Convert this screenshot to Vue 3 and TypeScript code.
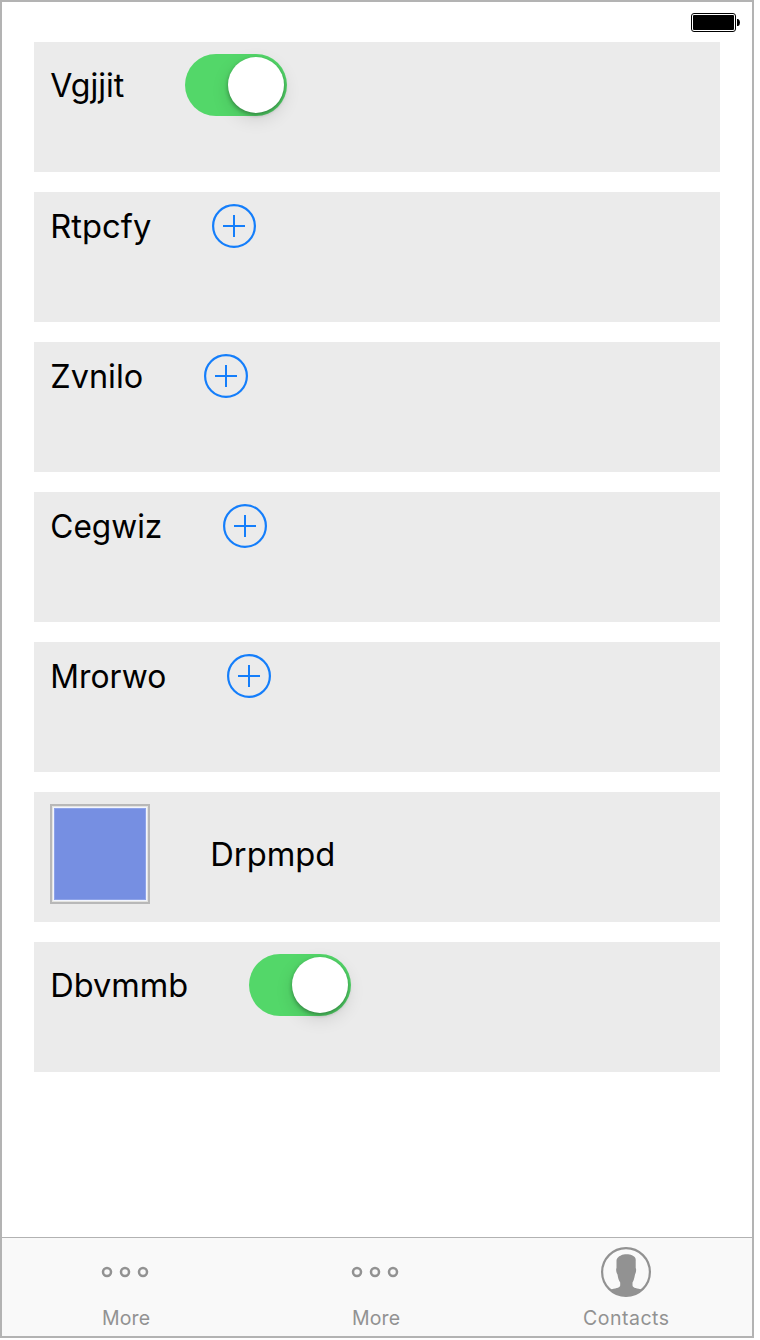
<script setup lang="ts">
type Kind = 'switch' | 'add' | 'image'

interface Row {
  label: string
  width: number
  kind: Kind
}

interface Tab {
  label: string
  width: number
  icon: 'more' | 'contacts'
}

const rows: Row[] = [
  { label: 'Vgjjit', width: 75, kind: 'switch' },
  { label: 'Rtpcfy', width: 102, kind: 'add' },
  { label: 'Zvnilo', width: 94, kind: 'add' },
  { label: 'Cegwiz', width: 113, kind: 'add' },
  { label: 'Mrorwo', width: 117, kind: 'add' },
  { label: 'Drpmpd', width: 126, kind: 'image' },
  { label: 'Dbvmmb', width: 139, kind: 'switch' },
]

const tabs: Tab[] = [
  { label: 'More', width: 48, icon: 'more' },
  { label: 'More', width: 48, icon: 'more' },
  { label: 'Contacts', width: 86, icon: 'contacts' },
]
</script>

<template>
  <div class="screen">
    <header class="status">
      <svg class="battery" width="50" height="20" viewBox="0 0 50 20">
        <rect x="0.5" y="0.5" width="44" height="18" rx="2.5" fill="#fff" stroke="#000" />
        <rect x="2" y="2" width="41" height="15" rx="1" fill="#000" />
        <path d="M46 6h1.2Q49 7 49 9.5T47.2 13H46z" fill="#000" />
      </svg>
    </header>

    <main class="rows">
      <section v-for="row in rows" :key="row.label" class="row">
        <div v-if="row.kind === 'image'" class="swatch"></div>
        <svg class="label" :width="row.width" height="40">
          <text x="0.3" y="32" :textLength="row.width - 1" lengthAdjust="spacingAndGlyphs">{{ row.label }}</text>
        </svg>
        <div v-if="row.kind === 'switch'" class="switch"><div class="knob"></div></div>
        <svg v-if="row.kind === 'add'" width="44" height="44" viewBox="0 0 44 44" fill="none" stroke="#147efb" stroke-width="2">
          <circle cx="22" cy="22" r="20.9" stroke-width="2.2" />
          <path d="M11 22H33M22 11V33" />
        </svg>
      </section>
    </main>

    <nav class="tabs">
      <div v-for="(tab, i) in tabs" :key="i" class="tab">
        <svg v-if="tab.icon === 'more'" class="icon" width="50" height="50" viewBox="0 0 50 50" fill="none" stroke="#929292" stroke-width="2.5">
          <circle cx="6" cy="25" r="4" />
          <circle cx="24" cy="25" r="4" />
          <circle cx="42" cy="25" r="4" />
        </svg>
        <svg v-else class="icon" width="50" height="50" viewBox="0 0 50 50">
          <circle cx="25" cy="25" r="23.9" fill="none" stroke="#929292" stroke-width="2.2" />
          <path
            d="M15.5 21V14.500C15.200 10.500 18.500 9.300 20.200 8.200C23 6.800 28 6.800 31 8.200C34 9.500 35 11 34.700 14V21C35.600 22 35 25.800 34 27.500C33.500 30.500 32.700 33.800 31.500 35.500V38.500C32 41.200 36 41.300 41.500 42.800C32 51.500 18 51.500 9 42.800C14 41.300 18.700 41.200 19.200 38.500V35.500C17.700 33.500 17 30.500 16.500 27.500C15.300 25.800 14.700 22 15.500 21Z"
            fill="#929292"
          />
        </svg>
        <svg class="caption" :width="tab.width" height="26">
          <text x="0" y="20" :textLength="tab.width" lengthAdjust="spacing">{{ tab.label }}</text>
        </svg>
      </div>
    </nav>
  </div>
</template>

<style>
body {
  background: #fff;
}
</style>

<style scoped>
.screen {
  box-sizing: border-box;
  width: 754px;
  height: 1338px;
  border: 2px solid #b3b3b3;
  display: flex;
  flex-direction: column;
  background: #fff;
  font-family: Inter, "Liberation Sans", sans-serif;
}
.status {
  height: 40px;
  box-sizing: border-box;
  padding: 11px 11px 0 0;
  display: flex;
  justify-content: flex-end;
}
.battery {
  display: block;
}
.rows {
  flex: 1;
  padding: 0 32px;
  display: flex;
  flex-direction: column;
  gap: 20px;
}
.row {
  box-sizing: border-box;
  height: 130px;
  padding: 12px 16px;
  background: #ebebeb;
  display: flex;
  align-items: center;
  align-content: flex-start;
  flex-wrap: wrap;
  gap: 60px;
}
.label,
.caption {
  display: block;
  overflow: visible;
}
.label text {
  font-size: 33px;
  fill: #000;
}
.switch {
  box-sizing: border-box;
  width: 102px;
  height: 62px;
  padding: 3px;
  border-radius: 31px;
  background: #53d769;
  display: flex;
  justify-content: flex-end;
}
.knob {
  width: 56px;
  height: 56px;
  border-radius: 50%;
  background: #fff;
  box-shadow: 0 6px 18px rgba(0, 0, 0, 0.12), 0 2px 4px rgba(0, 0, 0, 0.33);
}
.swatch {
  box-sizing: border-box;
  width: 100px;
  height: 100px;
  border: 2px solid #b8b8b8;
  padding: 2px;
  background: #768fe2 content-box;
  box-shadow: inset 0 0 0 1px #e4e4e0, inset 0 0 0 2px #f2f5ff, inset 0 0 0 3px #8ea3e8;
}
.tabs {
  box-sizing: border-box;
  height: 99px;
  border-top: 1px solid #b2b2b2;
  background: #f9f9f9;
  display: flex;
}
.tab {
  box-sizing: border-box;
  width: 250px;
  padding: 9px 2px 0 0;
  display: flex;
  flex-direction: column;
  align-items: center;
}
.icon {
  display: block;
}
.caption {
  margin-top: 8px;
}
.caption text {
  font-size: 19.5px;
  fill: #929292;
}
</style>
